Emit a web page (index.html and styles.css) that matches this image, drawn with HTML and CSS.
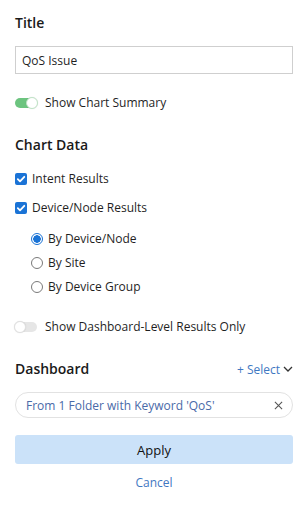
FILE: index.html
```html
<!DOCTYPE html>
<html>
<head>
<meta charset="utf-8">
<link rel="stylesheet" href="styles.css">
</head>
<body>
<div class="panel">
  <div class="heading h-title">Title</div>
  <div class="input">QoS Issue</div>
  <div class="row toggle-row r-summary">
    <span class="toggle on"><span class="knob"></span></span>
    <span class="label">Show Chart Summary</span>
  </div>
  <div class="heading h-chart">Chart Data</div>
  <div class="row check-row r-intent">
    <span class="check"><svg viewBox="0 0 12 12" width="12" height="12"><path d="M2.8 6.2 L5 8.4 L9.3 3.8" fill="none" stroke="#fff" stroke-width="1.8" stroke-linecap="round" stroke-linejoin="round"/></svg></span>
    <span class="label">Intent Results</span>
  </div>
  <div class="row check-row r-device">
    <span class="check"><svg viewBox="0 0 12 12" width="12" height="12"><path d="M2.8 6.2 L5 8.4 L9.3 3.8" fill="none" stroke="#fff" stroke-width="1.8" stroke-linecap="round" stroke-linejoin="round"/></svg></span>
    <span class="label">Device/Node Results</span>
  </div>
  <div class="radios">
    <div class="row radio-row"><span class="radio sel"></span><span class="label">By Device/Node</span></div>
    <div class="row radio-row"><span class="radio"></span><span class="label">By Site</span></div>
    <div class="row radio-row"><span class="radio"></span><span class="label">By Device Group</span></div>
  </div>
  <div class="row toggle-row r-dash">
    <span class="toggle off"><span class="knob"></span></span>
    <span class="label">Show Dashboard-Level Results Only</span>
  </div>
  <div class="dash-head">
    <div class="heading">Dashboard</div>
    <div class="select">+ Select <svg viewBox="0 0 10 6" width="10" height="6"><path d="M1 1 L5 5 L9 1" fill="none" stroke="#333" stroke-width="1.3"/></svg></div>
  </div>
  <div class="chip">
    <span class="chip-text">From 1 Folder with Keyword 'QoS'</span>
    <svg class="chip-x" viewBox="0 0 10 10" width="9" height="9"><path d="M1 1 L9 9 M9 1 L1 9" fill="none" stroke="#555" stroke-width="1.2"/></svg>
  </div>
  <div class="apply">Apply</div>
  <div class="cancel">Cancel</div>
</div>
</body>
</html>
```
FILE: styles.css
```css
* { box-sizing: border-box; }
html, body { margin: 0; padding: 0; background: #fff; }
body { font-family: "Open Sans", "Liberation Sans", sans-serif; font-size: 12px; color: #1f1f1f; }
.panel { padding: 13px 15px 0 15px; display: flex; flex-direction: column; }
.heading { font-size: 14px; font-weight: 600; line-height: 20px; color: #1a1a1a; }
.input { margin-top: 13px; height: 28px; border: 1px solid #cfcfcf; padding: 0 6px; display: flex; align-items: center; font-size: 12px; }
.row { display: flex; align-items: center; height: 20px; }
.label { line-height: 20px; }
.r-summary { margin-top: 19px; }
.toggle { width: 22px; height: 10px; border-radius: 5px; position: relative; margin-right: 8px; flex: none; }
.toggle.on { background: #6cc47f; }
.toggle.off { background: #e6e6e6; }
.knob { position: absolute; top: -1px; width: 12px; height: 12px; border-radius: 50%; background: #fff; border: 1px solid #d0d0d0; box-shadow: 0 0 1px rgba(0,0,0,0.15); }
.toggle.on .knob { right: -1px; border-color: #bfe4c6; }
.toggle.off .knob { left: -1px; border-color: #e0e0e0; }
.h-chart { margin-top: 22px; }
.r-intent { margin-top: 14px; }
.r-device { margin-top: 9px; }
.check { width: 12px; height: 12px; border-radius: 2px; background: #1a73d6; margin-right: 5px; flex: none; display: flex; }
.radios { margin-top: 11px; padding-left: 16px; display: flex; flex-direction: column; gap: 4px; }
.radio { width: 12px; height: 12px; border-radius: 50%; border: 1px solid #7a7a7a; margin-right: 5px; flex: none; background: #fff; }
.radio.sel { border-color: #1a73d6; background: radial-gradient(circle, #1a73d6 0 3.5px, #fff 4px); }
.r-dash { margin-top: 20px; }
.dash-head { margin-top: 22px; display: flex; justify-content: space-between; align-items: center; }
.select { color: #3f78c2; font-size: 12px; display: flex; align-items: center; gap: 3px; }
.chip { margin-top: 13px; height: 26px; border: 1px solid #e2e2e2; border-radius: 13px; display: flex; align-items: center; justify-content: space-between; padding: 0 9px 0 10px; }
.chip-text { color: #4a6aa8; font-size: 12px; }
.apply { margin-top: 17px; height: 29px; background: #cbe2f9; border-radius: 3px; display: flex; align-items: center; justify-content: center; font-size: 13px; color: #111; }
.cancel { margin-top: 10px; text-align: center; color: #3f78c2; font-size: 12px; line-height: 18px; }
```
